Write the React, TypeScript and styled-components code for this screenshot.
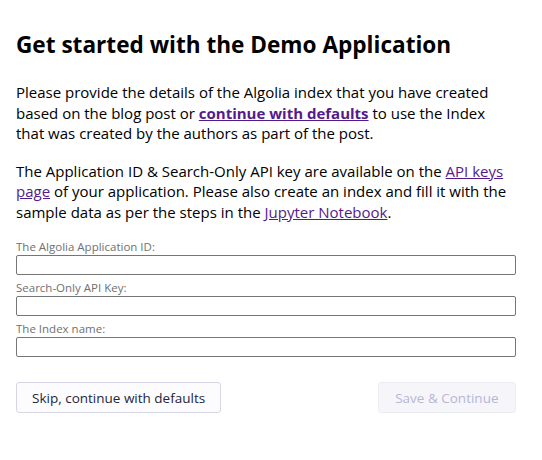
import styled, { createGlobalStyle } from "styled-components";

const GlobalStyle = createGlobalStyle`
  html, body {
    margin: 0;
    padding: 0;
    background: #ffffff;
  }
  body {
    font-family: "Open Sans", Lato, sans-serif;
    color: #000000;
  }
`;

const Page = styled.div`
  width: 500px;
  padding: 16px;
`;

const Title = styled.h1`
  margin: 14px 0 22px;
  font-size: 22.6px;
  font-weight: 700;
  line-height: 30px;
`;

const Paragraph = styled.p`
  margin: 0 0 17px;
  font-size: 15px;
  line-height: 20.5px;
`;

const Link = styled.a<{ $bold?: boolean }>`
  color: #551a8b;
  font-weight: ${(p) => (p.$bold ? 700 : 400)};
  text-decoration: underline;
  cursor: pointer;
`;

const Form = styled.form`
  display: flex;
  flex-direction: column;
  gap: 5px;
  margin-top: 16px;
`;

const Field = styled.label`
  display: flex;
  flex-direction: column;
`;

const FieldLabel = styled.span`
  font-size: 11.5px;
  line-height: 16px;
  color: #707070;
`;

const Input = styled.input`
  box-sizing: border-box;
  width: 100%;
  height: 20px;
  margin: 0;
  padding: 1px 4px;
  border: 1px solid #767676;
  border-radius: 2px;
  font: inherit;
  font-size: 13px;
  background: #ffffff;
`;

const Actions = styled.div`
  display: flex;
  justify-content: space-between;
  margin-top: 25px;
`;

const Button = styled.button<{ $disabled?: boolean }>`
  box-sizing: border-box;
  height: 31px;
  padding: 0 ${(p) => (p.$disabled ? "16.5px" : "15px")};
  border: 1px solid ${(p) => (p.$disabled ? "#ececf3" : "#d6d6e7")};
  border-radius: 3px;
  background: ${(p) => (p.$disabled ? "#f5f5fa" : "#fcfcff")};
  color: ${(p) => (p.$disabled ? "#b6b7d5" : "#23263b")};
  font-family: "Open Sans", Lato, sans-serif;
  font-size: 13.5px;
  cursor: ${(p) => (p.$disabled ? "default" : "pointer")};
`;

export default function App() {
  return (
    <>
      <GlobalStyle />
      <Page>
        <Title>Get started with the Demo Application</Title>
        <Paragraph>
          Please provide the details of the Algolia index that you have created
          based on the blog post or <Link $bold>continue with defaults</Link> to
          use the Index that was created by the authors as part of the post.
        </Paragraph>
        <Paragraph>
          The Application ID &amp; Search-Only API key are available on the{" "}
          <Link>API keys page</Link> of your application. Please also create an
          index and fill it with the sample data as per the steps in the{" "}
          <Link>Jupyter Notebook</Link>.
        </Paragraph>
        <Form onSubmit={(e) => e.preventDefault()}>
          <Field>
            <FieldLabel>The Algolia Application ID:</FieldLabel>
            <Input type="text" />
          </Field>
          <Field>
            <FieldLabel>Search-Only API Key:</FieldLabel>
            <Input type="text" />
          </Field>
          <Field>
            <FieldLabel>The Index name:</FieldLabel>
            <Input type="text" />
          </Field>
        </Form>
        <Actions>
          <Button type="button">Skip, continue with defaults</Button>
          <Button type="button" $disabled disabled>
            Save &amp; Continue
          </Button>
        </Actions>
      </Page>
    </>
  );
}
